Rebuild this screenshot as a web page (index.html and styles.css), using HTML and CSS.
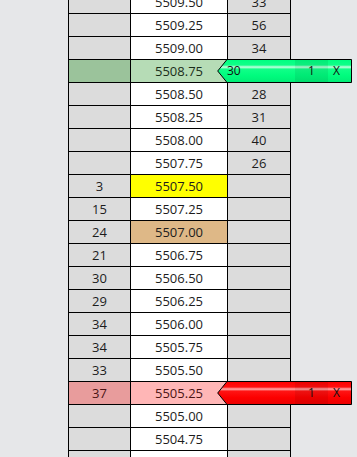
FILE: index.html
```html
<!DOCTYPE html>
<html>
<head>
<meta charset="utf-8">
<link rel="stylesheet" href="styles.css">
</head>
<body>
<div class="ladder">
  <div class="c bid"></div><div class="c price">5509.50</div><div class="c ask">33</div>
  <div class="c bid"></div><div class="c price">5509.25</div><div class="c ask">56</div>
  <div class="c bid"></div><div class="c price">5509.00</div><div class="c ask">34</div>
  <div class="c bid green"></div><div class="c price green">5508.75</div>
  <div class="c ask">
    <div class="order">
      <svg class="shape" width="135" height="24" viewBox="0 0 135 24">
        <defs>
          <linearGradient id="gg" x1="0" y1="0" x2="0" y2="1">
            <stop offset="0" stop-color="#00ff80"/>
            <stop offset="0.24" stop-color="#10ff88"/>
            <stop offset="0.33" stop-color="#c8ffe2"/>
            <stop offset="0.42" stop-color="#10ff88"/>
            <stop offset="0.7" stop-color="#00fc7e"/>
            <stop offset="1" stop-color="#00ec76"/>
          </linearGradient>
        </defs>
        <polygon points="10,0.5 134.5,0.5 134.5,23.5 10,23.5 0.7,12" fill="url(#gg)" stroke="#000" stroke-width="1"/>
        <rect x="78" y="1" width="33" height="22" fill="rgba(0,0,0,0.07)"/>
      </svg>
      <span class="qty">30</span><span class="cnt">1</span><span class="x">X</span>
    </div>
  </div>
  <div class="c bid"></div><div class="c price">5508.50</div><div class="c ask">28</div>
  <div class="c bid"></div><div class="c price">5508.25</div><div class="c ask">31</div>
  <div class="c bid"></div><div class="c price">5508.00</div><div class="c ask">40</div>
  <div class="c bid"></div><div class="c price">5507.75</div><div class="c ask">26</div>
  <div class="c bid">3</div><div class="c price last">5507.50</div><div class="c ask"></div>
  <div class="c bid">15</div><div class="c price">5507.25</div><div class="c ask"></div>
  <div class="c bid">24</div><div class="c price tan">5507.00</div><div class="c ask"></div>
  <div class="c bid">21</div><div class="c price">5506.75</div><div class="c ask"></div>
  <div class="c bid">30</div><div class="c price">5506.50</div><div class="c ask"></div>
  <div class="c bid">29</div><div class="c price">5506.25</div><div class="c ask"></div>
  <div class="c bid">34</div><div class="c price">5506.00</div><div class="c ask"></div>
  <div class="c bid">34</div><div class="c price">5505.75</div><div class="c ask"></div>
  <div class="c bid">33</div><div class="c price">5505.50</div><div class="c ask"></div>
  <div class="c bid red">37</div><div class="c price red">5505.25</div>
  <div class="c ask">
    <div class="order">
      <svg class="shape" width="135" height="24" viewBox="0 0 135 24">
        <defs>
          <linearGradient id="rg" x1="0" y1="0" x2="0" y2="1">
            <stop offset="0" stop-color="#ff0000"/>
            <stop offset="0.24" stop-color="#ff1010"/>
            <stop offset="0.33" stop-color="#ffb0b0"/>
            <stop offset="0.42" stop-color="#ff1414"/>
            <stop offset="0.7" stop-color="#fc0000"/>
            <stop offset="1" stop-color="#ea0000"/>
          </linearGradient>
        </defs>
        <polygon points="10,0.5 134.5,0.5 134.5,23.5 10,23.5 0.7,12" fill="url(#rg)" stroke="#000" stroke-width="1"/>
        <rect x="78" y="1" width="33" height="22" fill="rgba(0,0,0,0.07)"/>
      </svg>
      <span class="qty"></span><span class="cnt">1</span><span class="x">X</span>
    </div>
  </div>
  <div class="c bid"></div><div class="c price">5505.00</div><div class="c ask"></div>
  <div class="c bid"></div><div class="c price">5504.75</div><div class="c ask"></div>
  <div class="c bid"></div><div class="c price"></div><div class="c ask"></div>
</div>
</body>
</html>
```
FILE: styles.css
```css
html, body {
  margin: 0;
  padding: 0;
  background: #e6e7e9;
  overflow: hidden;
  height: 457px;
}
body {
  font-family: "Open Sans", "DejaVu Sans", sans-serif;
  font-size: 13px;
  color: #1c1c1c;
}
.ladder {
  display: grid;
  grid-template-columns: 61px 96px 62px;
  grid-auto-rows: 22px;
  gap: 1px;
  padding: 1px;
  background: #000;
  width: 221px;
  margin: -10px 0 0 68px;
}
.c {
  display: flex;
  align-items: center;
  justify-content: center;
  line-height: 22px;
}
.bid, .ask { background: #dcdcdc; }
.price { background: #fff; }
.bid.green { background: #9bc39b; }
.price.green { background: #b6dcb6; color: #1a2e1a; }
.price.last { background: #ffff00; }
.price.tan { background: #deb887; }
.bid.red { background: #e89c9c; color: #4a1414; }
.price.red { background: #ffb6b6; color: #4a1414; }
.ask { position: relative; }
.order {
  position: absolute;
  left: -11px;
  top: -1px;
  width: 135px;
  height: 24px;
  display: flex;
  align-items: center;
  font-size: 12px;
  color: #111;
}
.shape {
  position: absolute;
  left: 0;
  top: 0;
}
.order span {
  position: relative;
  line-height: 24px;
}
.qty { width: 68px; padding-left: 10px; }
.cnt { width: 33px; text-align: center; }
.x { width: 17px; text-align: center; }
```
